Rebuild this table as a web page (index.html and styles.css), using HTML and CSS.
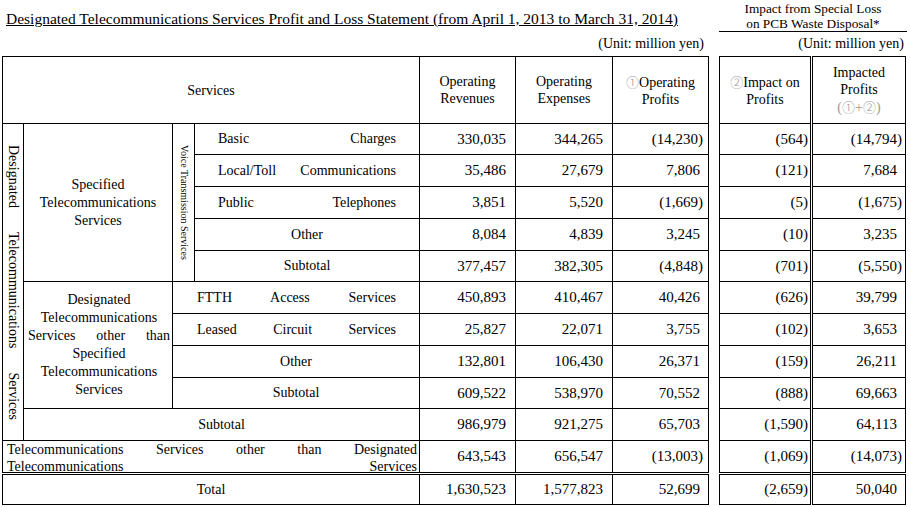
FILE: index.html
```html
<!DOCTYPE html>
<html lang="en">
<head>
<meta charset="utf-8">
<title>Designated Telecommunications Services Profit and Loss Statement</title>
<link rel="stylesheet" href="styles.css">
</head>
<body>
<div class="page">
  <div class="top">
    <div class="top-left">
      <div class="title">Designated Telecommunications Services Profit and Loss Statement (from April 1, 2013 to March 31, 2014)</div>
      <div class="unit">(Unit: million yen)</div>
    </div>
    <div class="top-right">
      <div class="impact-title">Impact from Special Loss<br>on PCB Waste Disposal*</div>
      <div class="unit unit-r">(Unit: million yen)</div>
    </div>
  </div>
  <table class="pl">
    <colgroup>
      <col class="w-a"><col class="w-b"><col class="w-c"><col class="w-d">
      <col class="w-rev"><col class="w-exp"><col class="w-op"><col class="w-gap">
      <col class="w-imp"><col class="w-tot">
    </colgroup>
    <tr class="rh">
      <th colspan="4" class="hd">Services</th>
      <th class="hd">Operating<br>Revenues</th>
      <th class="hd">Operating<br>Expenses</th>
      <th class="hd"><span class="circ">①</span>Operating<br>Profits</th>
      <td class="gap"></td>
      <th class="hd"><span class="circ">②</span>Impact on<br>Profits</th>
      <th class="hd dbl">Impacted<br>Profits<br><span class="gray">(<span class="circ">①</span>+<span class="circ">②</span>)</span></th>
    </tr>
    <tr class="r31">
      <td rowspan="10" class="vcell"><div class="vt-main">Designated Telecommunications Services</div></td>
      <td rowspan="5" class="grp">Specified<br>Telecommunications<br>Services</td>
      <td rowspan="5" class="vcell"><div class="vt-voice">Voice Transmission Services</div></td>
      <td class="lbl">Basic Charges</td>
      <td class="n">330,035</td><td class="n">344,265</td><td class="n p5">(14,230)</td>
      <td class="gap"></td>
      <td class="n p2">(564)</td><td class="n dbl p3">(14,794)</td>
    </tr>
    <tr class="r32">
      <td class="lbl">Local/Toll Communications</td>
      <td class="n">35,486</td><td class="n">27,679</td><td class="n p8">7,806</td>
      <td class="gap"></td>
      <td class="n p2">(121)</td><td class="n dbl p8">7,684</td>
    </tr>
    <tr class="r32">
      <td class="lbl">Public Telephones</td>
      <td class="n">3,851</td><td class="n">5,520</td><td class="n p5">(1,669)</td>
      <td class="gap"></td>
      <td class="n p2">(5)</td><td class="n dbl p3">(1,675)</td>
    </tr>
    <tr class="r32">
      <td class="ctr">Other</td>
      <td class="n">8,084</td><td class="n">4,839</td><td class="n p8">3,245</td>
      <td class="gap"></td>
      <td class="n p2">(10)</td><td class="n dbl p8">3,235</td>
    </tr>
    <tr class="r31">
      <td class="ctr">Subtotal</td>
      <td class="n">377,457</td><td class="n">382,305</td><td class="n p5">(4,848)</td>
      <td class="gap"></td>
      <td class="n p2">(701)</td><td class="n dbl p3">(5,550)</td>
    </tr>
    <tr class="r32">
      <td rowspan="4" class="grp grp2">
        <div>Designated</div>
        <div>Telecommunications</div>
        <div class="just">Services other than</div>
        <div>Specified</div>
        <div>Telecommunications</div>
        <div>Services</div>
      </td>
      <td colspan="2" class="lbl lbl2">FTTH Access Services</td>
      <td class="n">450,893</td><td class="n">410,467</td><td class="n p8">40,426</td>
      <td class="gap"></td>
      <td class="n p2">(626)</td><td class="n dbl p8">39,799</td>
    </tr>
    <tr class="r32">
      <td colspan="2" class="lbl lbl2">Leased Circuit Services</td>
      <td class="n">25,827</td><td class="n">22,071</td><td class="n p8">3,755</td>
      <td class="gap"></td>
      <td class="n p2">(102)</td><td class="n dbl p8">3,653</td>
    </tr>
    <tr class="r32">
      <td colspan="2" class="ctr">Other</td>
      <td class="n">132,801</td><td class="n">106,430</td><td class="n p8">26,371</td>
      <td class="gap"></td>
      <td class="n p2">(159)</td><td class="n dbl p8">26,211</td>
    </tr>
    <tr class="r31">
      <td colspan="2" class="ctr">Subtotal</td>
      <td class="n">609,522</td><td class="n">538,970</td><td class="n p8">70,552</td>
      <td class="gap"></td>
      <td class="n p2">(888)</td><td class="n dbl p8">69,663</td>
    </tr>
    <tr class="r32">
      <td colspan="3" class="ctr">Subtotal</td>
      <td class="n">986,979</td><td class="n">921,275</td><td class="n p8">65,703</td>
      <td class="gap"></td>
      <td class="n p2">(1,590)</td><td class="n dbl p8">64,113</td>
    </tr>
    <tr class="r32">
      <td colspan="4" class="wide-cell"><div class="wide">Telecommunications Services other than Designated<br>Telecommunications Services</div></td>
      <td class="n">643,543</td><td class="n">656,547</td><td class="n p5">(13,003)</td>
      <td class="gap"></td>
      <td class="n p2">(1,069)</td><td class="n dbl p3">(14,073)</td>
    </tr>
    <tr class="r31 total">
      <td colspan="4" class="ctr">Total</td>
      <td class="n">1,630,523</td><td class="n">1,577,823</td><td class="n p8">52,699</td>
      <td class="gap"></td>
      <td class="n p2">(2,659)</td><td class="n dbl p8">50,040</td>
    </tr>
  </table>
</div>
</body>
</html>
```

FILE: styles.css
```css
* { box-sizing: border-box; }

body {
  margin: 0;
  background: #fff;
  color: #000;
  font-family: "Liberation Serif", "Times New Roman", serif;
}

.page { width: 910px; }

.top {
  display: flex;
  height: 56px;
}

.top-left {
  width: 708px;
  display: flex;
  flex-direction: column;
}

.title {
  margin-top: 10px;
  padding-left: 6px;
  font-size: 15.5px;
  line-height: 17px;
  text-decoration: underline;
  white-space: nowrap;
}

.unit {
  margin-top: 8px;
  font-size: 14px;
  line-height: 17px;
  text-align: right;
  padding-right: 4px;
  white-space: nowrap;
}

.top-right {
  margin-left: 11px;
  width: 188px;
  display: flex;
  flex-direction: column;
}

.impact-title {
  margin-top: 1px;
  font-size: 13.3px;
  line-height: 15px;
  text-align: center;
  border-bottom: 1px solid #000;
}

.unit-r {
  margin-top: 3px;
  padding-right: 3px;
}

.pl {
  margin-left: 2px;
  border-collapse: collapse;
  table-layout: fixed;
  width: 903px;
  font-size: 14px;
}

.w-a { width: 21px; }
.w-b { width: 149px; }
.w-c { width: 22px; }
.w-d { width: 225px; }
.w-rev { width: 96px; }
.w-exp { width: 97px; }
.w-op { width: 96px; }
.w-gap { width: 11px; }
.w-imp { width: 92px; }
.w-tot { width: 94px; }

.pl th,
.pl td {
  border: 1px solid #000;
  padding: 0;
  font-weight: normal;
  vertical-align: middle;
}

.pl td.gap { border: none; }

.pl td.dbl,
.pl th.dbl { border-left: 3px double #000; }

.pl .total td:not(.gap) { border-top: 3px double #000; }

.rh { height: 67px; }
.r31 { height: 31px; }
.r32 { height: 32px; }

.hd {
  text-align: center;
  line-height: 17px;
}

.circ {
  font-family: "Noto Sans CJK JP", "DejaVu Sans", sans-serif;
  font-size: 13px;
  font-weight: 300;
  color: #9a9a9a;
}

.gray { color: #9a9a9a; }

.n {
  text-align: right;
  font-size: 15px;
  padding-right: 9px !important;
}
.n.p8 { padding-right: 8px !important; }
.n.p5 { padding-right: 5px !important; }
.n.p3 { padding-right: 3px !important; }
.n.p2 { padding-right: 2px !important; }

.vcell { text-align: center; }

.vt-main {
  writing-mode: vertical-rl;
  height: 275px;
  margin: 0 auto;
  line-height: 17px;
  text-align: justify;
  text-align-last: justify;
}

.vt-voice {
  writing-mode: vertical-rl;
  margin: 0 auto;
  font-size: 10px;
  line-height: 12px;
}

.grp {
  text-align: center;
  line-height: 18px;
}

.grp2 { padding: 0 2px 0 4px !important; }

.just {
  text-align: justify;
  text-align-last: justify;
}

.lbl {
  padding: 0 23px !important;
  text-align: justify;
  text-align-last: justify;
}

.lbl2 { padding: 0 23px 0 24px !important; }

.ctr { text-align: center; }

.wide-cell { vertical-align: top !important; }

.wide {
  height: 31px;
  padding: 0 2px 0 4px;
  line-height: 17px;
  text-align: justify;
  text-align-last: justify;
}
```
